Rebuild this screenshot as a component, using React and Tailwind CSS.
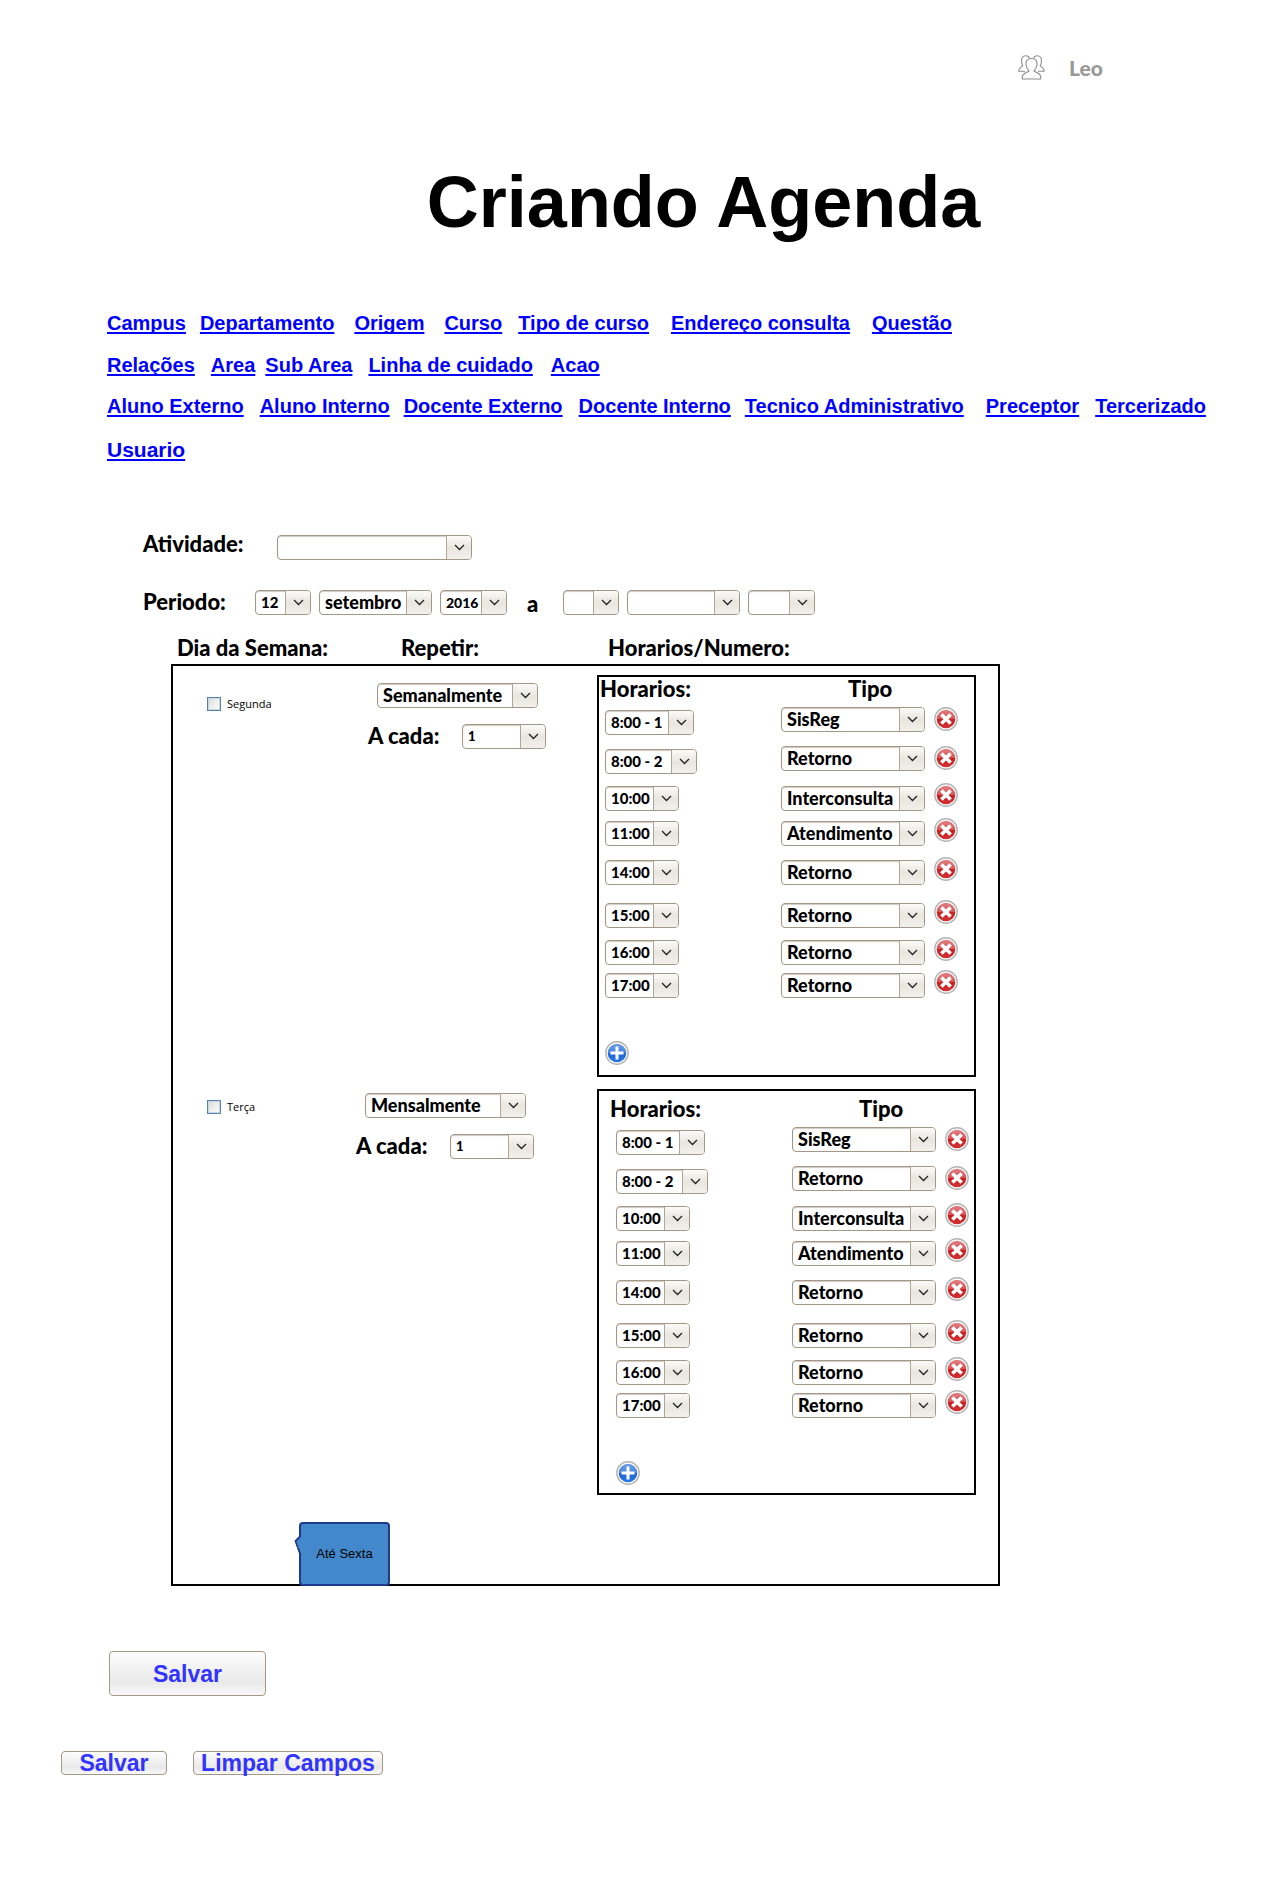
const linkRows = [
  {
    className: 'mt-[67px] text-xl',
    links: [
      ['Campus', ''],
      ['Departamento', 'ml-[14px]'],
      ['Origem', 'ml-[20px]'],
      ['Curso', 'ml-[20px]'],
      ['Tipo de curso', 'ml-[16px]'],
      ['Endereço consulta', 'ml-[22px]'],
      ['Questão', 'ml-[22px]'],
    ],
  },
  {
    className: 'mt-[14px] text-xl',
    links: [
      ['Relações', ''],
      ['Area', 'ml-[16px]'],
      ['Sub Area', 'ml-[10px]'],
      ['Linha de cuidado', 'ml-[16px]'],
      ['Acao', 'ml-[18px]'],
    ],
  },
  {
    className: 'mt-[13px] text-xl',
    links: [
      ['Aluno Externo', ''],
      ['Aluno Interno', 'ml-[16px]'],
      ['Docente Externo', 'ml-[14px]'],
      ['Docente Interno', 'ml-[16px]'],
      ['Tecnico Administrativo', 'ml-[14px]'],
      ['Preceptor', 'ml-[22px]'],
      ['Tercerizado', 'ml-[16px]'],
    ],
  },
  { className: 'mt-[16px] text-[21px]', links: [['Usuario', '']] },
];

const slots = [
  { hour: '8:00 - 1', hourWidth: 'w-[89px]', type: 'SisReg', gap: 'mt-[6px]', raised: true },
  { hour: '8:00 - 2', hourWidth: 'w-[92px]', type: 'Retorno', gap: 'mt-[11px]', raised: true },
  { hour: '10:00', hourWidth: 'w-[74px]', type: 'Interconsulta', gap: 'mt-[9px]' },
  { hour: '11:00', hourWidth: 'w-[74px]', type: 'Atendimento', gap: 'mt-[7px]' },
  { hour: '14:00', hourWidth: 'w-[74px]', type: 'Retorno', gap: 'mt-[11px]' },
  { hour: '15:00', hourWidth: 'w-[74px]', type: 'Retorno', gap: 'mt-[15px]' },
  { hour: '16:00', hourWidth: 'w-[74px]', type: 'Retorno', gap: 'mt-[9px]' },
  { hour: '17:00', hourWidth: 'w-[74px]', type: 'Retorno', gap: 'mt-[5px]' },
];

function Select({ id, label, value = '', className = '', textClass = 'text-[18px]' }) {
  return (
    <span className={`relative block h-[25px] shrink-0 ${className}`}>
      <select
        id={id}
        aria-label={label}
        defaultValue={value}
        className={`block h-full w-full appearance-none rounded-[4px] border border-[#a39887] bg-white pl-[5px] pr-[25px] leading-[21px] font-black text-black shadow-[inset_0_1px_1px_#cfcac3] ${textClass}`}
      >
        <option>{value}</option>
      </select>
      <span className="pointer-events-none absolute inset-y-px right-px flex w-[25px] items-center justify-center rounded-r-[3px] border-l border-[#b0a696] bg-linear-to-b from-[#fbfbf9] via-[#e9e6df] to-[#f2f0ec]">
        <svg width="11" height="7" viewBox="0 0 11 7" fill="none" stroke="#222" strokeWidth="1.3">
          <path d="M1 1 L5.5 5.5 L10 1" />
        </svg>
      </span>
    </span>
  );
}

function RoundIcon({ kind }) {
  const remove = kind === 'remove';
  return (
    <svg width="24" height="24" viewBox="0 0 24 24" className="block">
      <defs>
        <linearGradient id={`fill-${kind}`} x1="0" y1="0" x2="0" y2="1">
          <stop offset="0" stopColor={remove ? '#e08285' : '#6a9de6'} />
          <stop offset="0.48" stopColor={remove ? '#d75458' : '#4a88e0'} />
          <stop offset="0.52" stopColor={remove ? '#c9201f' : '#1f66d2'} />
          <stop offset="1" stopColor={remove ? '#d23336' : '#2b78e4'} />
        </linearGradient>
      </defs>
      <circle cx="12" cy="12" r="11.2" fill="#fff" stroke="#b4b4b4" strokeWidth="1.4" />
      <circle cx="12" cy="12" r="9.3" fill={`url(#fill-${kind})`} />
      <path
        d={remove ? 'M7.4 7.4 L16.6 16.6 M16.6 7.4 L7.4 16.6' : 'M12 5.5 V18.5 M5.5 12 H18.5'}
        stroke="#fff"
        strokeWidth={remove ? 3.6 : 3}
      />
    </svg>
  );
}

function Schedule({ day, className, shift }) {
  return (
    <section className={`border-2 border-black ${className}`}>
      <div className="flex leading-6">
        <h3 className={`w-[249px] ${shift ? 'pl-[11px]' : 'pl-px'}`}>Horarios:</h3>
        <h3 className={shift ? 'pl-[11px]' : ''}>Tipo</h3>
      </div>
      <div className={shift ? 'pl-[17px]' : 'pl-[6px]'}>
        {slots.map((slot) => (
          <div key={slot.hour} className={`flex h-7 items-end ${slot.gap}`}>
            <span className="w-[176px] shrink-0">
              <Select
                label={`Horario ${slot.hour}, ${day}`}
                value={slot.hour}
                className={slot.hourWidth}
                textClass="text-[15px]"
              />
            </span>
            <Select
              label={`Tipo ${slot.hour}, ${day}`}
              value={slot.type}
              className={slot.raised ? 'w-36 self-start' : 'w-36'}
            />
            <button type="button" aria-label={`Remover ${slot.hour}`} className="ml-[9px] shrink-0 self-start">
              <RoundIcon kind="remove" />
            </button>
          </div>
        ))}
        <button type="button" aria-label={`Adicionar horario, ${day}`} className="mt-[43px] block">
          <RoundIcon kind="add" />
        </button>
      </div>
    </section>
  );
}

function DayRow({ id, day, repeat, dayClass, repeatClass, scheduleClass, shift }) {
  return (
    <div className="flex">
      <div className={`w-[183px] shrink-0 pl-[34px] ${dayClass}`}>
        <label className="flex items-center gap-[6px] font-['Open_Sans',sans-serif] text-[11px] leading-[14px] font-normal">
          <input
            type="checkbox"
            className="size-[14px] appearance-none border border-[#5b84ad] bg-linear-to-br from-[#dcdcd7] to-white shadow-[inset_0_0_0_1px_#c5d5e4]"
          />
          {day}
        </label>
      </div>
      <div className={`grow ${repeatClass}`}>
        <Select label={`Repetir ${day}`} value={repeat} className="ml-[9px] w-[161px]" />
        <div className="mt-4 flex">
          <label htmlFor={`${id}-every`} className="w-[94px] leading-6">
            A cada:
          </label>
          <Select id={`${id}-every`} value="1" className="w-[84px]" textClass="text-[13px]" />
        </div>
      </div>
      <Schedule day={day} className={`w-[379px] shrink-0 ${scheduleClass}`} shift={shift} />
    </div>
  );
}

function PushButton({ children, className }) {
  return (
    <button
      type="button"
      className={`rounded-[4px] border border-[#a39887] bg-linear-to-b from-[#fdfdfd] via-[#e9e9e9] via-70% to-[#f8f8f8] text-center font-['Liberation_Sans',Arial,sans-serif] text-[23px] leading-6 font-bold whitespace-nowrap text-[#3333ff] ${className}`}
    >
      {children}
    </button>
  );
}

export default function App() {
  return (
    <div className="bg-white pb-20 font-['Lato',sans-serif] text-[22px] font-black text-black">
      <header className="flex items-center justify-end gap-[24px] pt-[55px] pr-[177px] text-[21px] leading-6 text-[#999]">
        <svg width="27" height="25" viewBox="0 0 27 25" fill="none" stroke="#8c8c8c" strokeWidth="1.1">
          <path d="M13.5 3.5 C9.5 3.5 7.7 6 8 9.5 C8.2 12 9.3 14.5 11 15.8 C10.4 17.5 4.6 17.5 4.2 22 L4.5 24 H22.5 L22.8 22 C22.4 17.5 16.6 17.5 16 15.8 C17.7 14.5 18.8 12 19 9.5 C19.3 6 17.5 3.5 13.5 3.5 Z" />
          <path d="M11.5 3.6 C11 1.6 9.5 0.8 7.8 0.8 C4.8 0.8 3.3 3 3.5 6 C3.6 8 4 9.5 4.8 10.8 C3 12 0.9 13 0.8 16.3 H7" />
          <path d="M15.5 3.6 C16 1.6 17.5 0.8 19.2 0.8 C22.2 0.8 23.7 3 23.5 6 C23.4 8 23 9.5 22.2 10.8 C24 12 26.1 13 26.2 16.3 H20" />
        </svg>
        <span>Leo</span>
      </header>

      <h1 className="mt-[82px] pl-[127px] text-center font-['Liberation_Sans',Arial,sans-serif] text-[72px] leading-20 font-bold">
        Criando Agenda
      </h1>

      <nav className="pl-[107px] font-['Liberation_Sans',Arial,sans-serif] font-bold">
        {linkRows.map((row) => (
          <div key={row.links[0][0]} className={`flex flex-wrap leading-7 ${row.className}`}>
            {row.links.map(([text, gap]) => (
              <a
                key={text}
                href="#"
                className={`text-[#0000ff] underline decoration-2 underline-offset-2 [text-decoration-skip-ink:none] ${gap}`}
              >
                {text}
              </a>
            ))}
          </div>
        ))}
      </nav>

      <form>
        <div className="mt-[68px] flex h-7 items-end pl-[143px]">
          <label htmlFor="activity" className="w-[134px] self-start leading-6">
            Atividade:
          </label>
          <Select id="activity" className="w-[195px]" />
        </div>
        <div className="mt-[30px] flex pl-[143px]">
          <span className="w-[112px] leading-6">Periodo:</span>
          <div className="flex gap-[8px]">
            <Select label="Dia inicial" value="12" className="w-[56px]" textClass="text-[15px]" />
            <Select label="Mês inicial" value="setembro" className="w-[113px]" />
            <Select label="Ano inicial" value="2016" className="w-[67px]" textClass="text-[14px]" />
          </div>
          <span className="w-[56px] pl-[20px] leading-7">a</span>
          <div className="flex gap-[8px]">
            <Select label="Dia final" className="w-[56px]" />
            <Select label="Mês final" className="w-[113px]" />
            <Select label="Ano final" className="w-[67px]" />
          </div>
        </div>

        <div className="mt-[16px] flex pb-[2px] pl-[177px] leading-7">
          <h2 className="w-[224px]">Dia da Semana:</h2>
          <h2 className="w-[207px]">Repetir:</h2>
          <h2>Horarios/Numero:</h2>
        </div>
        <div className="ml-[171px] max-w-[829px] border-2 border-black pt-[9px] pr-[22px]">
          <DayRow
            id="monday"
            day="Segunda"
            repeat="Semanalmente"
            dayClass="pt-[22px]"
            repeatClass="pt-[8px] pl-[12px]"
            scheduleClass="pb-[10px]"
          />
          <div className="h-[12px]" />
          <DayRow
            id="tuesday"
            day="Terça"
            repeat="Mensalmente"
            dayClass="pt-[11px]"
            repeatClass="pt-[4px]"
            scheduleClass="pt-[6px] pb-[8px]"
            shift
          />
          <div className="relative mt-[27px] -mb-[2px] ml-[126px] flex h-[64px] w-[91px] items-center justify-center rounded-[4px] border-2 border-[#1f3a8a] bg-[#4488cc] font-['Liberation_Sans',Arial,sans-serif] text-[13px] font-normal">
            <svg width="9" height="24" viewBox="0 0 9 24" className="absolute top-[10px] -left-[7px]">
              <path d="M8 1 L2 7 L8 22 H9 V1 Z" fill="#4488cc" />
              <path d="M6.5 2 L1.5 7 L6.5 21" fill="none" stroke="#1f3a8a" strokeWidth="1.8" />
            </svg>
            Até Sexta
          </div>
        </div>

        <PushButton className="mt-[65px] ml-[109px] block h-[45px] w-[157px]">Salvar</PushButton>
        <div className="mt-[55px] flex gap-[26px] pl-[61px]">
          <PushButton className="h-6 w-[106px] leading-[22px]">Salvar</PushButton>
          <PushButton className="h-6 w-[190px] leading-[22px]">Limpar Campos</PushButton>
        </div>
      </form>
    </div>
  );
}
